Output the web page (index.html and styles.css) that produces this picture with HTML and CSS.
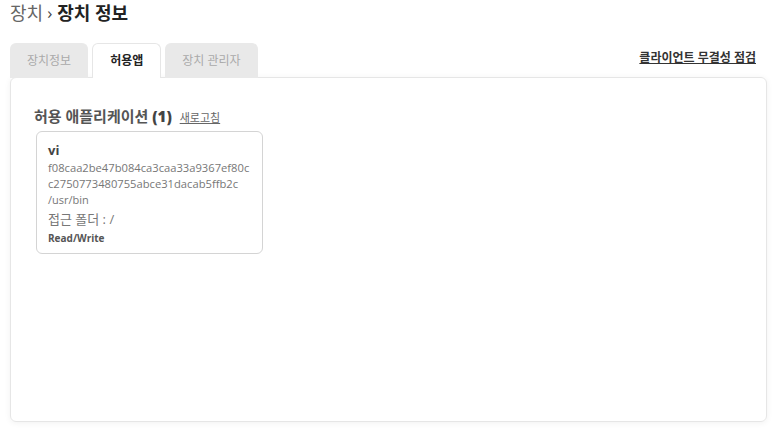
FILE: index.html
```html
<!DOCTYPE html>
<html>
<head>
<meta charset="utf-8" />
<title>장치 정보</title>
<link rel="stylesheet" href="styles.css">
</head>
<body>
<div class="page">
	<h1 class="title"><span class="crumb">장치</span><span class="sep">›</span><strong>장치 정보</strong></h1>
	<div class="tab_bar">
		<ul class="tabs">
			<li><a href="###">장치정보</a></li>
			<li class="on"><a href="###">허용앱</a></li>
			<li><a href="###">장치 관리자</a></li>
		</ul>
		<a class="check" href="###">클라이언트 무결성 점검</a>
	</div>
	<div class="panel">
		<h2 class="sub">허용 애플리케이션 <b>(1)</b> <a class="refresh" href="###">새로고침</a></h2>
		<div class="apps">
			<div class="app">
				<div class="name">vi</div>
				<div class="hash">f08caa2be47b084ca3caa33a9367ef80cc2750773480755abce31dacab5ffb2c</div>
				<div class="path">/usr/bin</div>
				<div class="folder">접근 폴더 : /</div>
				<div class="perm">Read/Write</div>
			</div>
		</div>
	</div>
</div>
</body>
</html>
```
FILE: styles.css
```css
*{margin:0;padding:0;box-sizing:border-box;}
li{list-style:none;}
a{text-decoration:none;color:inherit;}
body{background:#fff;font:12px/1.4 "Open Sans","Noto Sans CJK KR",sans-serif;color:#333;}
.page{padding:0 10px 10px;height:432px;display:flex;flex-direction:column;}
.title{font-size:18px;font-weight:normal;line-height:26px;padding-top:0;color:#222;display:flex;align-items:center;}
.title .crumb{color:#666;}
.title .sep{color:#444;margin:0 5px 0 4px;font-size:17px;}
.title strong{font-weight:bold;}
.tab_bar{display:flex;justify-content:space-between;align-items:flex-end;margin-top:17px;position:relative;z-index:2;}
.tabs{display:flex;gap:4px;}
.tabs li a{display:block;height:35px;line-height:34px;padding:0 16px;background:#e9e9e9;color:#aaa;border-radius:6px 6px 0 0;border:1px solid #e9e9e9;border-bottom:0;}
.tabs li.on a{background:#fff;color:#222;font-weight:bold;border-color:#e6e6e6;padding:0 17px;}
.check{font-weight:bold;color:#333;text-decoration:underline;margin:0 11px 11px 0;font-size:12px;}
.panel{flex:1;border:1px solid #e6e6e6;border-radius:6px;box-shadow:0 1px 6px rgba(0,0,0,0.06);margin-top:-1px;padding:28px 23px;}
.sub{font-size:15px;font-weight:bold;color:#555;line-height:20px;}
.sub b{color:#444;}
.refresh{font-size:11px;font-weight:normal;color:#666;text-decoration:underline;margin-left:4px;}
.apps{display:flex;gap:10px;margin-top:3px;padding-left:2px;}
.app{width:227px;border:1px solid #d4d4d4;border-radius:6px;padding:8px 12px 7px 11px;color:#777;font-size:11px;line-height:16px;}
.app .name{font-weight:bold;color:#444;font-size:13px;line-height:20px;}
.app .hash{word-break:break-all;font-size:11.2px;}
.app .folder{margin-top:2px;font-size:13px;line-height:18px;}
.app .perm{font-size:10px;font-weight:bold;color:#555;margin-top:2px;}
```
